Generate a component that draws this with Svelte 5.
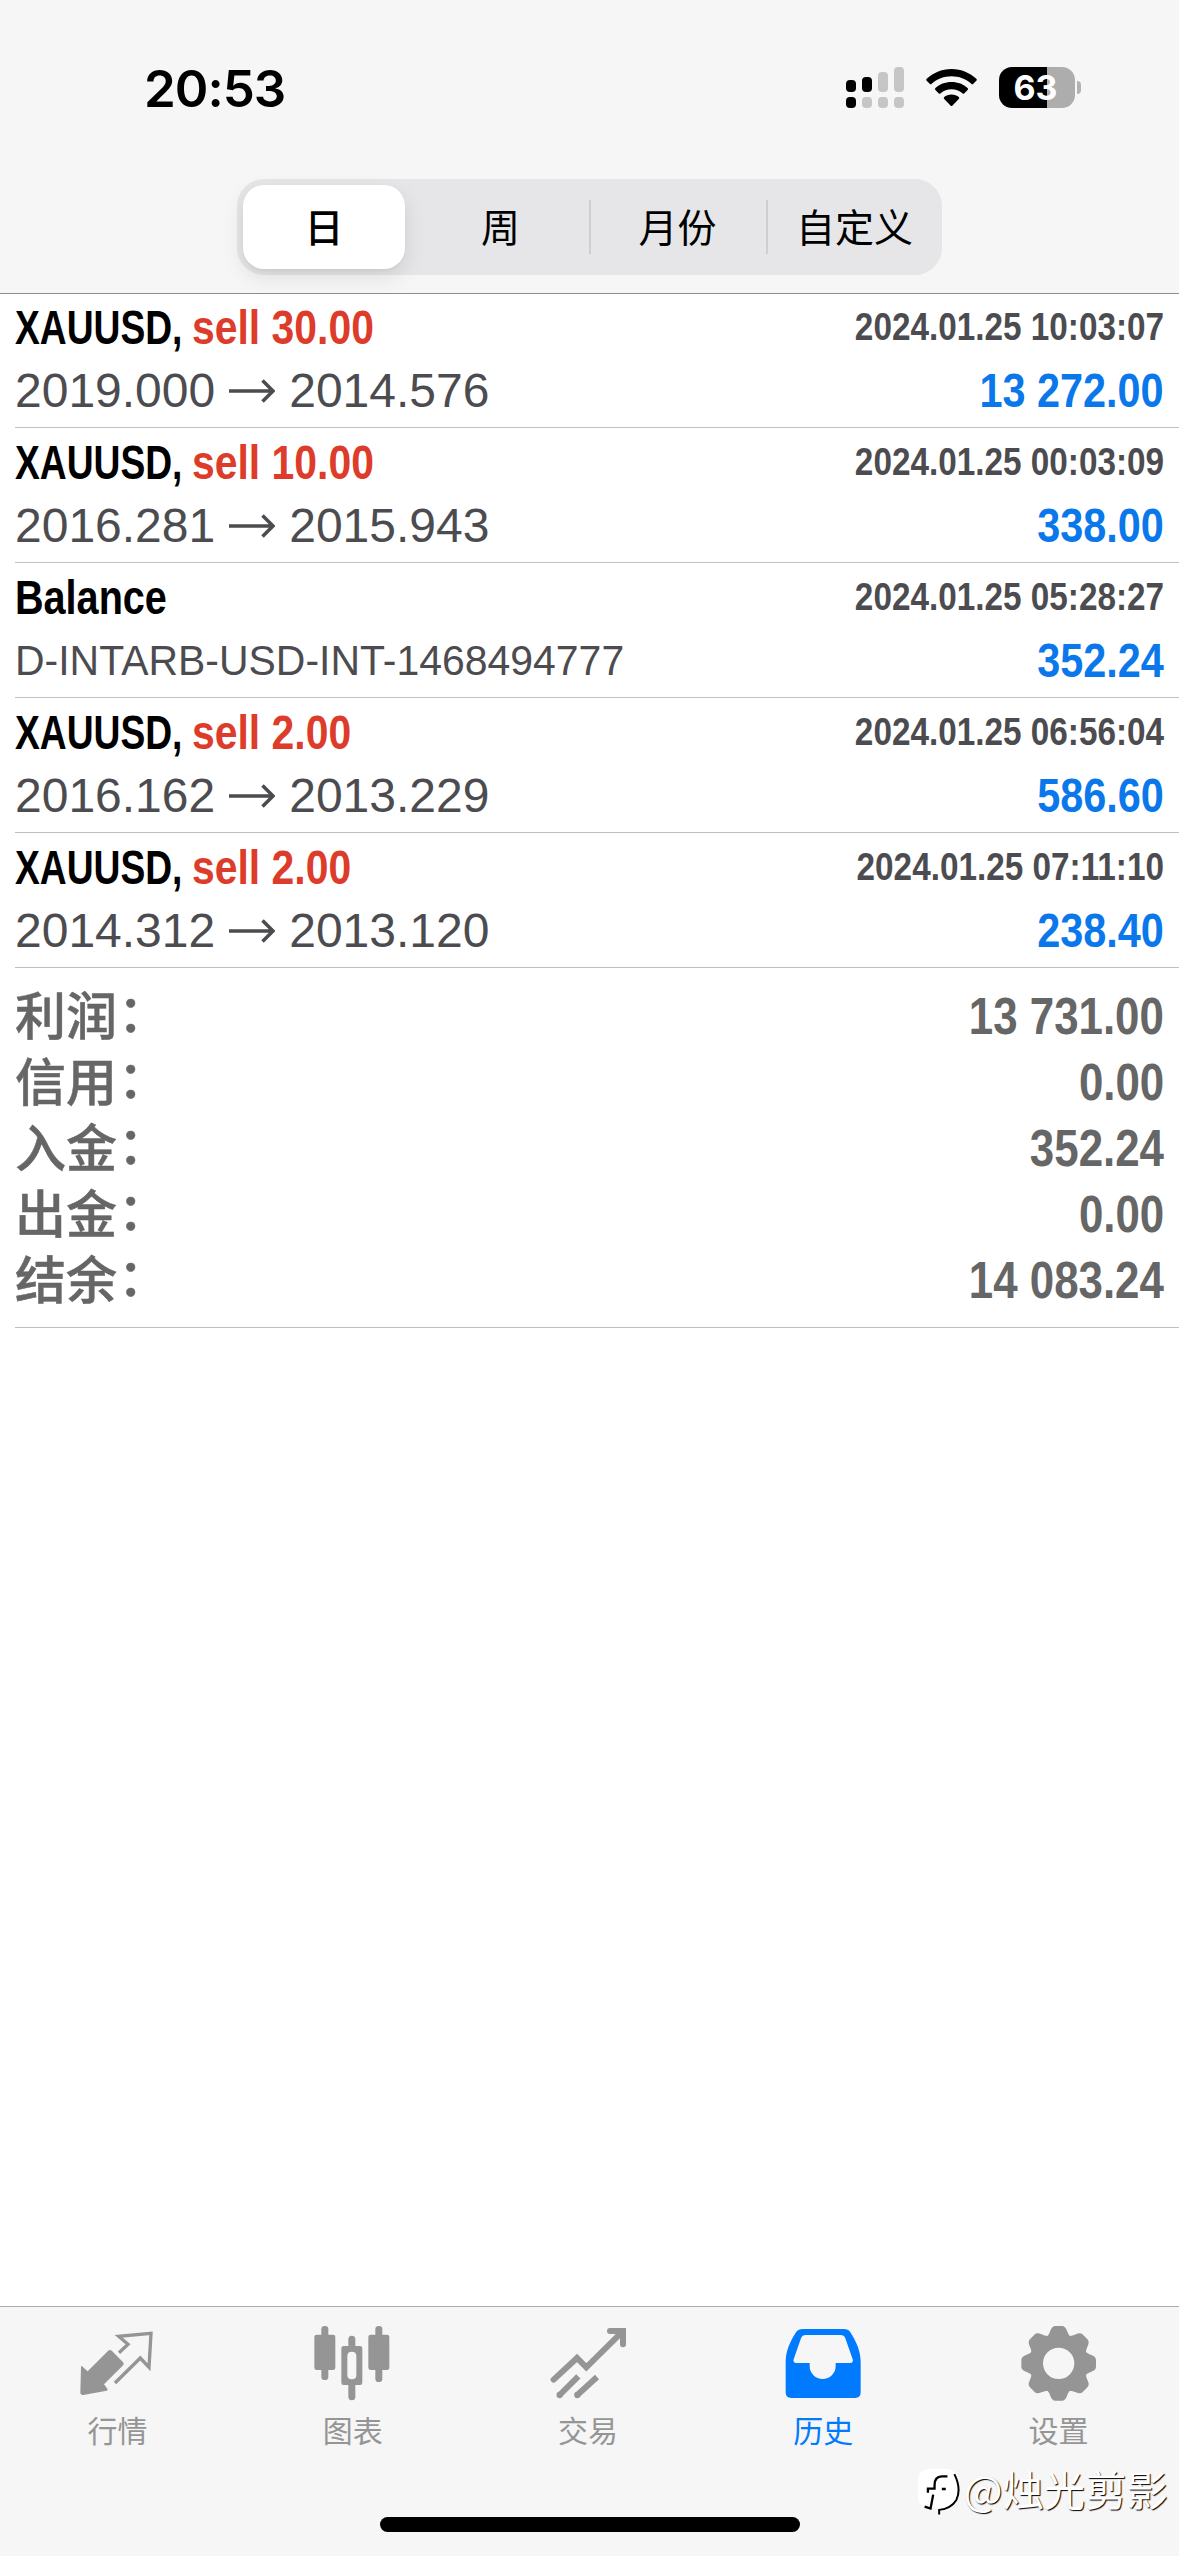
<script>
  const tabs = ['日', '周', '月份', '自定义'];
  const deals = [
    { symbol: 'XAUUSD,', side: 'sell 30.00', time: '2024.01.25 10:03:07', from: '2019.000', to: '2014.576', value: '13 272.00' },
    { symbol: 'XAUUSD,', side: 'sell 10.00', time: '2024.01.25 00:03:09', from: '2016.281', to: '2015.943', value: '338.00' },
    { symbol: 'Balance', time: '2024.01.25 05:28:27', note: 'D-INTARB-USD-INT-1468494777', value: '352.24' },
    { symbol: 'XAUUSD,', side: 'sell 2.00', time: '2024.01.25 06:56:04', from: '2016.162', to: '2013.229', value: '586.60' },
    { symbol: 'XAUUSD,', side: 'sell 2.00', time: '2024.01.25 07:11:10', from: '2014.312', to: '2013.120', value: '238.40' }
  ];
  const totals = [
    ['利润', '13 731.00'],
    ['信用', '0.00'],
    ['入金', '352.24'],
    ['出金', '0.00'],
    ['结余', '14 083.24']
  ];
</script>

<div class="screen">
  <header>
    <div class="status">
      <span class="clock">20:53</span>
      <div class="indicators">
        <svg class="signal" viewBox="0 0 58 42">
          <g fill="#000"><rect x="0" y="13" width="10" height="12" rx="4" /><rect x="16" y="10" width="10" height="15" rx="4" /><rect x="0" y="30" width="10" height="11" rx="4" /></g>
          <g fill="#c6c6c6"><rect x="32" y="5" width="10" height="20" rx="4" /><rect x="48" y="0" width="10" height="25" rx="4" /><rect x="16" y="30" width="10" height="11" rx="4" /><rect x="32" y="30" width="10" height="11" rx="4" /><rect x="48" y="30" width="10" height="11" rx="4" /></g>
        </svg>
        <svg class="wifi" viewBox="0 0 51 38">
          <path d="M25.500 0C35.500 0 44 4 50.300 9.800q1 1 0 2l-3 3q-1 1-2 0C40 10 33 7.300 25.500 7.300S11 10 5.700 14.800q-1 1-2 0l-3-3q-1-1 0-2C7 4 15.500 0 25.500 0z" />
          <path d="M25.500 13C32 13 37.500 15.300 41.600 19q1 1 0 2l-3.200 3.200q-1 1-2 0C33.300 21.500 29.600 20.300 25.500 20.300S17.700 21.500 14.600 24.200q-1 1-2 0L9.400 21q-1-1 0-2C13.500 15.300 19 13 25.500 13z" />
          <path d="M25.500 25.500c3 0 5.500 1 7.300 2.600q1 1 0 2L26.500 36.500q-1 1-2 0l-6.300-6.400q-1-1 0-2c1.800-1.600 4.300-2.600 7.300-2.600z" />
        </svg>
        <div class="battery"><span>63</span></div>
        <i class="tip"></i>
      </div>
    </div>
    <nav class="segments">
      {#each tabs as tab, i}
        <button class:on={i === 0} class:split={i > 1}>{tab}</button>
      {/each}
    </nav>
  </header>

  <main>
    {#each deals as d}
      <section class="deal">
        <div class="line first">
          <div class="title">
            <span class="symbol" class:plain={!d.side}>{d.symbol}</span>
            {#if d.side}<span class="side">{d.side}</span>{/if}
          </div>
          <time>{d.time}</time>
        </div>
        <div class="line second">
          {#if d.note}
            <span class="note">{d.note}</span>
          {:else}
            <div class="prices">
              <span>{d.from}</span>
              <svg viewBox="0 0 46 24"><path d="M0 12H43M33.500 1.500L44 12L33.500 22.500" /></svg>
              <span>{d.to}</span>
            </div>
          {/if}
          <b class="value">{d.value}</b>
        </div>
      </section>
    {/each}
    <section class="totals">
      {#each totals as [label, value]}
        <div class="total"><span class="label">{label}<i>：</i></span><b>{value}</b></div>
      {/each}
    </section>
  </main>

  <footer>
    <nav class="tabbar">
      <div class="tab">
        <svg viewBox="91 108 225 225">
          <path d="M94 230q0-4 3-1l17 15 61-61q6-6 12 0l32 32q6 6 0 12l-56 56 10 13q3 5-2 6l-70 13q-9 1-9-8z" />
          <path class="line-art" d="M208 188L235 163 207 139 304 130 298 232 272 204 196 279" stroke-width="10" />
        </svg>
        <span>行情</span>
      </div>
      <div class="tab">
        <svg viewBox="797 108 225 225">
          <rect x="795" y="134" width="63" height="106" rx="7" /><rect x="816" y="108" width="21" height="162" rx="10" />
          <rect x="957" y="134" width="63" height="106" rx="7" /><rect x="978" y="108" width="21" height="168" rx="10" />
          <path fill-rule="evenodd" d="M897 148a10 10 0 0 1 21 0V168H932q7 0 7 7V278q0 7-7 7H918V320a10 10 0 0 1-21 0V285H883q-7 0-7-7V175q0-7 7-7H897zM894 198V256q0 12 13.500 12T921 256V198q0-13-13.500-13T894 198z" />
        </svg>
        <span>图表</span>
      </div>
      <div class="tab">
        <svg viewBox="93 108 225 225">
          <path class="line-art round" d="M101 269L171 204 199 232 308 124M270 123H309V163" stroke-width="18" />
          <path class="line-art" d="M119 315L175 259M172 315L231 261" stroke-width="18" />
          <circle cx="119" cy="315" r="9.500" /><circle cx="172" cy="315" r="9.500" />
        </svg>
        <span>交易</span>
      </div>
      <div class="tab active">
        <svg viewBox="799 108 225 225">
          <path fill-rule="evenodd" d="M850 117H972Q986 117 992 127C1010 155 1023 184 1023 216V307Q1023 324 1006 324H815Q798 324 798 307V216C798 184 811 155 829 127Q836 117 850 117zM858 135Q848 135 844 145L822 208Q819 219 830 219H870V228A39 39 0 0 0 948 228V219H991Q1002 219 999 208L977 145Q973 135 963 135z" />
        </svg>
        <span>历史</span>
      </div>
      <div class="tab">
        <svg viewBox="425 108 225 225">
          <g transform="translate(538 220)">
            <path fill-rule="evenodd" d="M-47 0a47 47 0 1 0 94 0a47 47 0 1 0-94 0zM0-88A88 88 0 1 0 0 88A88 88 0 1 0 0-88z" />
            {#each [0, 45, 90, 135, 180, 225, 270, 315] as a}
              <path transform={`rotate(${a})`} d="M-39-78Q-30-83-25-98Q-20-112-10-112H10Q20-112 25-98Q30-83 39-78L24-62H-24z" />
            {/each}
          </g>
        </svg>
        <span>设置</span>
      </div>
    </nav>
    <div class="home"></div>
    <div class="mark">
      <svg viewBox="105 535 130 150">
        <path d="M145 540H195Q232 545 232 590Q232 655 178 673L165 655H130Q108 650 108 625V575Q108 542 145 540z" fill="#fff" />
        <path d="M218 556Q240 600 224 634Q208 660 172 664V678" fill="none" stroke="#000" stroke-width="6" />
        <path d="M197 563H180Q158 563 158 590V600H138V612M154 618L146 660 128 654M180 601H192" fill="none" stroke="#000" stroke-width="7" />
      </svg>
      <span>@烛光剪影</span>
    </div>
  </footer>
</div>

<style>
  :global(body) { background: #fff; }
  .screen { width: 1179px; height: 2556px; display: flex; flex-direction: column; background: #fff; overflow: hidden; font-family: 'Liberation Sans', 'Noto Sans CJK SC', sans-serif; color: #000; }
  header { box-sizing: border-box; height: 294px; flex: none; background: #f6f6f6; border-bottom: 1px solid #8f8f8f; }
  .status { height: 179px; box-sizing: border-box; padding: 60px 98px 0 144px; display: flex; justify-content: space-between; align-items: flex-start; }
  .clock { font: 600 51px/57px Inter, sans-serif; letter-spacing: -1px; }
  .indicators { display: flex; align-items: flex-start; padding-top: 7px; }
  .signal { width: 58px; height: 42px; }
  .wifi { width: 51px; height: 38px; margin: 2px 22px 0 22px; }
  .battery { width: 76px; height: 41px; border-radius: 13px; background: linear-gradient(90deg, #000 63%, #adadad 63%); color: #fff; text-align: center; font: 700 34px/42px Inter, sans-serif; text-indent: -3px; }
  .tip { width: 4px; height: 13px; margin: 14px 0 0 2px; border-radius: 0 4px 4px 0; background: #b2b2b2; }
  .segments { width: 705px; height: 96px; box-sizing: border-box; margin-left: 237px; padding: 6px 0 6px 6px; display: flex; border-radius: 27px; background: #e6e6e8; }
  button { flex: none; width: 177px; height: 84px; padding: 0 0 4px; border: 0; background: none; font: 400 39px/80px 'Noto Sans CJK SC', sans-serif; color: #000; position: relative; }
  button.on { width: 162px; margin-right: 7px; border-radius: 21px; background: #fff; font-weight: 500; box-shadow: 0 8px 22px rgba(0,0,0,.1), 0 2px 3px rgba(0,0,0,.04); }
  button.split::before { content: ''; position: absolute; left: 0; top: 15px; width: 2px; height: 54px; background: #cfcfd2; }
  main { flex: 1; margin-top: -1px; }
  .deal { height: 135px; box-sizing: border-box; margin-left: 15px; padding: 8px 15px 0 0; border-bottom: 1px solid #c0c0c3; }
  .line { display: flex; justify-content: space-between; height: 63px; line-height: 54px; white-space: nowrap; }
  .title { display: flex; font-size: 48px; font-weight: 700; }
  .symbol { width: 177px; transform: scaleX(.775); transform-origin: left; }
  .symbol.plain { transform: scaleX(.825); }
  .side { color: #dd3c2b; transform: scaleX(.852); transform-origin: left; }
  time { font-size: 39px; font-weight: 700; line-height: 52px; color: #4c4c50; transform: scaleX(.854); transform-origin: right; }
  .prices { display: flex; align-items: flex-start; font-size: 48px; color: #4c4c50; }
  .prices svg { width: 46px; height: 24px; margin: 15px 14px 0 14px; fill: none; stroke: #4c4c50; stroke-width: 3.500; }
  .note { font-size: 42px; line-height: 53px; color: #4c4c50; transform: scaleX(.975); transform-origin: left; }
  .value { font-size: 48px; color: #0a78eb; transform: scaleX(.862); transform-origin: right; }
  .totals { height: 360px; box-sizing: border-box; margin-left: 15px; padding: 17px 15px 0 0; border-bottom: 1px solid #c0c0c3; color: #666; }
  .total { height: 66px; display: flex; justify-content: space-between; font-size: 51px; line-height: 64px; }
  .total b { transform: scaleX(.86); transform-origin: right; }
  .label { font-family: 'Noto Sans CJK SC', sans-serif; font-weight: 500; line-height: 57px; -webkit-text-stroke: .5px #666; }
  .label i { font-style: normal; position: relative; left: 1px; top: -3px; }
  footer { position: relative; height: 250px; flex: none; box-sizing: border-box; border-top: 1px solid #adadad; background: #f6f6f6; }
  .tabbar { display: flex; padding: 19px 3px 0 0; height: 190px; box-sizing: border-box; }
  .tab { flex: 1; display: flex; flex-direction: column; align-items: center; color: #959595; font: 400 30px/40px 'Noto Sans CJK SC', sans-serif; }
  .tab svg { width: 75px; height: 75px; overflow: visible; fill: currentColor; }
  .tab span { margin-top: 8px; }
  .tab.active { color: #007aff; }
  .line-art { fill: none; stroke: currentColor; }
  .round { stroke-linecap: round; }
  .home { width: 420px; height: 15px; border-radius: 8px; background: #000; margin: 20px auto 0; }
  .mark { position: absolute; right: 11px; top: 152px; display: flex; align-items: center; color: #fff; font: 400 41px/50px 'Noto Sans CJK SC', sans-serif; letter-spacing: .3px; text-shadow: 1px 1px 1px #000; }
  .mark svg { width: 43px; height: 50px; margin: 8px 4px 0 0; }
</style>
